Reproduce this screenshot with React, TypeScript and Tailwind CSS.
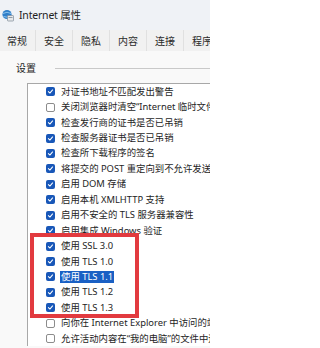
import React from "react";

type Row = { label: string; checked: boolean; selected?: boolean };

const rows: Row[] = [
  { label: "对证书地址不匹配发出警告", checked: true },
  { label: "关闭浏览器时清空\u201cInternet 临时文件\u201d文件夹", checked: false },
  { label: "检查发行商的证书是否已吊销", checked: true },
  { label: "检查服务器证书是否已吊销", checked: true },
  { label: "检查所下载程序的签名", checked: true },
  { label: "将提交的 POST 重定向到不允许发送的区域时发出警告", checked: true },
  { label: "启用 DOM 存储", checked: true },
  { label: "启用本机 XMLHTTP 支持", checked: true },
  { label: "启用不安全的 TLS 服务器兼容性", checked: true },
  { label: "启用集成 Windows 验证", checked: true },
  { label: "使用 SSL 3.0", checked: true },
  { label: "使用 TLS 1.0", checked: true },
  { label: "使用 TLS 1.1", checked: true, selected: true },
  { label: "使用 TLS 1.2", checked: true },
  { label: "使用 TLS 1.3", checked: true },
  { label: "向你在 Internet Explorer 中访问的站点发送 Do Not Track 请求", checked: false },
  { label: "允许活动内容在\u201c我的电脑\u201d的文件中运行", checked: false },
];

const tabs = ["常规", "安全", "隐私", "内容", "连接", "程序"];

function CheckBox({ checked }: { checked: boolean }) {
  if (!checked) {
    return <span className="block w-[9px] h-[9px] shrink-0 rounded-[2px] border border-[#8c8c8c] bg-white" />;
  }
  return (
    <span className="flex items-center justify-center w-[9px] h-[9px] shrink-0 rounded-[2px] bg-[#1857b8]">
      <svg width="7" height="7" viewBox="0 0 10 10" fill="none">
        <path d="M2 5.2 L4.1 7.2 L8 2.8" stroke="white" strokeWidth="1.5" strokeLinecap="round" strokeLinejoin="round" />
      </svg>
    </span>
  );
}

function AppIcon() {
  return (
    <svg width="12" height="13" viewBox="0 0 12 13" className="shrink-0">
      <circle cx="5" cy="5.5" r="4.6" fill="#2f7fc9" />
      <path d="M1 4.5 Q5 2 9 4.5 M1.5 7.5 Q5 9 8.5 7" stroke="#9fd2f5" strokeWidth="0.8" fill="none" />
      <rect x="5.5" y="6.5" width="6" height="5.5" rx="0.6" fill="#e6e8ea" stroke="#7c8a96" strokeWidth="0.7" />
      <rect x="6.5" y="8" width="4" height="0.8" fill="#7c8a96" />
    </svg>
  );
}

export default function App() {
  return (
    <div className="relative w-[210px] h-[348px] overflow-hidden bg-[#f9f9f9] text-[#1e1e1e] font-['Noto_Sans','Noto_Sans_CJK_SC',sans-serif]">
      {/* title bar */}
      <div className="flex items-center h-[30px] pl-[2px] gap-[5px] bg-[#eff2f6]">
        <AppIcon />
        <span className="text-[10.5px] leading-none tracking-[-0.2px]">Internet 属性</span>
      </div>

      {/* tabs */}
      <div className="flex h-[21px] bg-[#f1f1f1] -ml-[1px]">
        {tabs.map((t) => (
          <div
            key={t}
            className="flex items-center justify-center w-[37px] shrink-0 border-r border-[#e0e0e0] text-[10px] leading-none text-[#2a2a2a]"
          >
            {t}
          </div>
        ))}
      </div>

      {/* group header */}
      <div className="flex items-center h-[32px] pl-[16px] pt-[2px]">
        <span className="text-[10px] leading-none">设置</span>
        <div className="ml-[19px] flex-1 h-px bg-[#c9c9c9]" />
      </div>

      {/* list box */}
      <div className="ml-[27px] border-l border-t border-[#a8a8a8] bg-white">
        {rows.map((r) => (
          <div key={r.label} className="flex items-center h-[15.44px] pl-[18px] gap-[6px] whitespace-nowrap">
            <CheckBox checked={r.checked} />
            <span
              className={
                r.selected
                  ? "text-[9.4px] leading-[12px] px-[1px] -ml-[1px] bg-[#1a60c4] text-white"
                  : "text-[9.4px] leading-[12px]"
              }
            >
              {r.label}
            </span>
          </div>
        ))}
      </div>

      {/* red annotation box */}
      <div className="absolute left-[30px] top-[233px] w-[109px] h-[85px] border-[4px] border-[#e23a3f]" />
    </div>
  );
}
